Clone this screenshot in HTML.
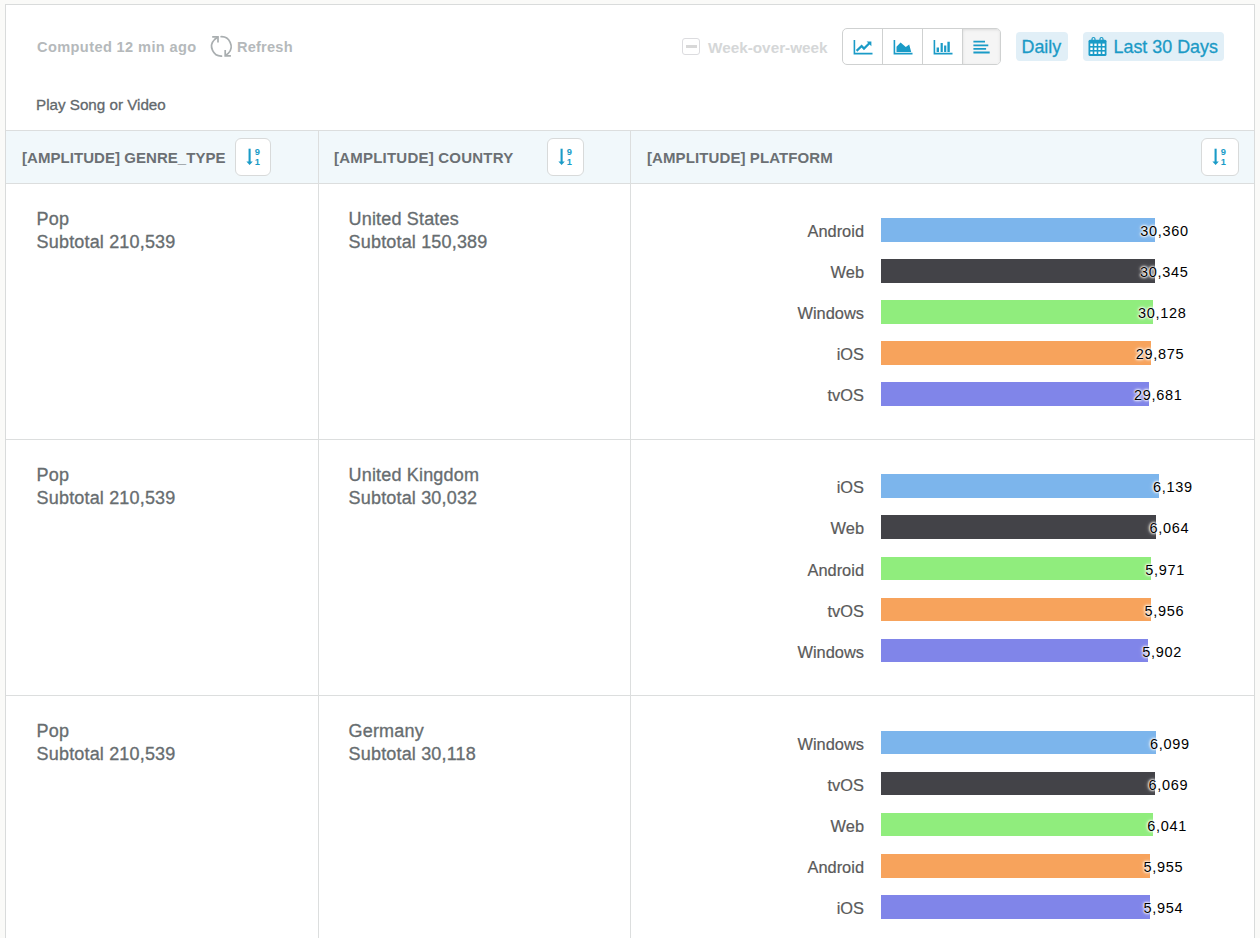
<!DOCTYPE html>
<html><head><meta charset="utf-8">
<style>
html,body{margin:0;padding:0;}
body{width:1260px;height:938px;overflow:hidden;background:#fafaf8;font-family:"Liberation Sans",sans-serif;position:relative;}
.wrap{position:absolute;left:5px;top:4px;width:1248px;height:960px;border:1px solid #d9dbdb;background:#fff;}
.abs{position:absolute;white-space:nowrap;}
.computed{left:31px;top:33.5px;font-size:14.6px;font-weight:bold;letter-spacing:0.38px;color:#b5b9bb;}
.refresh{left:231px;top:33.5px;font-size:14.6px;font-weight:bold;letter-spacing:0.2px;color:#b5b9bb;}
.wow{left:702px;top:34px;font-size:15.3px;font-weight:bold;color:#d5d7d8;}
.chk{left:676px;top:33px;width:16px;height:15px;border:1px solid #dcdcdf;border-radius:3px;}
.chk:after{content:"";position:absolute;left:2.5px;top:6px;width:11px;height:3px;background:#d8d8d8;}
.bg{left:836px;top:23px;height:35px;border:1px solid #cfd1d1;border-radius:5px;display:flex;overflow:hidden;}
.bg>div{width:39px;height:35px;border-left:1px solid #cfd1d1;position:relative;}
.bg>div:first-child{border-left:none;}
.bg>div.act{background:#f5f5f5;box-shadow:inset 0 1px 3px rgba(0,0,0,.11);}
.bg svg{position:absolute;left:0;top:0;}
.chip{top:27px;height:29px;background:#e1eff7;border-radius:4px;color:#1b9ac6;font-size:17.9px;-webkit-text-stroke:0.3px #1b9ac6;}
.chip span{position:absolute;top:5px;}
.title{left:30px;top:91.3px;font-size:15.2px;color:#62686c;-webkit-text-stroke:0.3px #62686c;}
.hdr{left:0;top:125px;width:1248px;height:52px;border-top:1px solid #dcdede;border-bottom:1px solid #dcdede;background:#f1f8fb;}
.ht{position:absolute;top:17.6px;font-size:15px;font-weight:bold;color:#6b7074;white-space:nowrap;letter-spacing:0.05px;}
.sep{position:absolute;top:125px;width:1px;height:900px;background:#dcdede;}
.sort{position:absolute;top:7px;box-sizing:border-box;height:38px;border:1px solid #d8dada;border-radius:6px;background:#fff;}
.sort svg{position:absolute;left:0;top:0;}
.row{position:absolute;left:0;width:1248px;height:255px;border-bottom:1px solid #dcdede;}
.cell{position:absolute;top:24px;font-size:18px;color:#676d70;line-height:23px;white-space:nowrap;-webkit-text-stroke:0.32px #676d70;letter-spacing:0.17px;}
.c1{left:30.6px;}
.c2{left:342.6px;}
.bl{position:absolute;left:658px;width:200px;text-align:right;font-size:16.4px;color:#5a5a5a;height:26px;line-height:26px;-webkit-text-stroke:0.2px #5a5a5a;}
.bar{position:absolute;left:875px;height:23.5px;}
.bv{position:absolute;width:200px;text-align:right;font-size:14.5px;letter-spacing:0.7px;color:#000;height:27px;line-height:27px;text-shadow:0 0 5px rgba(255,255,255,.7),0 0 3px #fff,0 0 3px #fff,0 0 2px #fff,0 0 1px #fff;}
</style></head><body>
<div class="wrap">
 <div class="abs computed">Computed 12 min ago</div>
 <svg class="abs" style="left:199px;top:25px" width="32" height="32" viewBox="0 0 32 32" fill="none" stroke="#a9aeb0" stroke-width="1.7">
<path d="M17.2 26.1 A9.7 9.7 0 0 1 9.6 9.5 L13 6.9"/><path d="M7.2 6.8 H13 V12.6"/>
<path d="M15.4 6.75 A9.7 9.7 0 0 1 23.2 23.3 L20.3 25.6"/><path d="M20.2 20.1 V25.9 H25.9"/>
</svg>
 <div class="abs refresh">Refresh</div>
 <div class="abs chk"></div>
 <div class="abs wow">Week-over-week</div>
 <div class="abs bg">
  <div><svg width="39" height="34" viewBox="0 0 39 34"><path d="M11.4 11 V24.6 H29.5" fill="none" stroke="#1a9bc7" stroke-width="1.6"/><path d="M13.6 21.9 L18.6 17 L21 19.6 L26.6 14" fill="none" stroke="#1a9bc7" stroke-width="2.2"/><path d="M23.6 12.4 H28.4 V17.2Z" fill="#1a9bc7"/></svg></div>
  <div><svg width="39" height="34" viewBox="0 0 39 34"><path d="M11.4 11 V24.6 H29.5" fill="none" stroke="#1a9bc7" stroke-width="1.6"/><path d="M13.5 23.1 V17.8 L17.6 13.5 L22.8 18.1 L26.2 15.6 L28.2 23.1Z" fill="#1a9bc7"/></svg></div>
  <div><svg width="39" height="34" viewBox="0 0 39 34"><path d="M11.4 11 V24.6 H29.5" fill="none" stroke="#1a9bc7" stroke-width="1.6"/><path d="M13.6 23.1 V18.5 H16 V23.1Z M17.6 23.1 V13.9 H19.8 V23.1Z M21.1 23.1 V16.4 H23.3 V23.1Z M24.4 23.1 V12.8 H26.8 V23.1Z" fill="#1a9bc7"/></svg></div>
  <div class="act" style="width:37px"><svg width="39" height="34" viewBox="0 0 39 34"><path d="M10.4 11.7 H22 V13.5 H10.4Z M10.4 15.5 H25.3 V17.3 H10.4Z M10.4 18.9 H23.1 V20.7 H10.4Z M10.4 22.4 H26.7 V24.4 H10.4Z" fill="#1a9bc7"/></svg></div>
 </div>
 <div class="abs chip" style="left:1010px;width:52px;"><span style="left:5.5px">Daily</span></div>
 <div class="abs chip" style="left:1077px;width:141px;">
  <svg style="position:absolute;left:-0.5px;top:0" width="40" height="29" viewBox="0 0 40 29"><rect x="5.5" y="7.8" width="18" height="16.1" rx="1.5" fill="#1a9bc7"/>
  <path d="M9 10 V7 A1.5 1.5 0 0 1 12 7 V10 M17 10 V7 A1.5 1.5 0 0 1 20 7 V10" fill="none" stroke="#1a9bc7" stroke-width="1.2"/>
  <g fill="#fff"><rect x="7.3" y="11.6" width="2.4" height="2.4"/><rect x="11.3" y="11.6" width="2.4" height="2.4"/><rect x="15.3" y="11.6" width="2.4" height="2.4"/><rect x="19.3" y="11.6" width="2.4" height="2.4"/><rect x="7.3" y="15.6" width="2.4" height="2.4"/><rect x="11.3" y="15.6" width="2.4" height="2.4"/><rect x="15.3" y="15.6" width="2.4" height="2.4"/><rect x="19.3" y="15.6" width="2.4" height="2.4"/><rect x="7.3" y="19.6" width="2.4" height="2.4"/><rect x="11.3" y="19.6" width="2.4" height="2.4"/><rect x="15.3" y="19.6" width="2.4" height="2.4"/><rect x="19.3" y="19.6" width="2.4" height="2.4"/></g></svg>
  <span style="left:30.5px">Last 30 Days</span></div>
 <div class="abs title">Play Song or Video</div>
 <div class="abs hdr">
  <div class="ht" style="left:16px">[AMPLITUDE] GENRE_TYPE</div>
  <div class="sort" style="left:229.2px;width:36px"><svg width="36" height="36" viewBox="0 0 36 36">
<path d="M13.6 9.7 V23.5" stroke="#1a9bc7" stroke-width="2.1"/><path d="M10.4 22.4 L13.6 25.9 L16.8 22.4Z" fill="#1a9bc7"/>
<text x="21.4" y="16.4" font-size="9.3" font-weight="bold" fill="#1a9bc7" text-anchor="middle" font-family="Liberation Sans">9</text>
<text x="21.4" y="26.3" font-size="9.3" font-weight="bold" fill="#1a9bc7" text-anchor="middle" font-family="Liberation Sans">1</text>
</svg></div>
  <div class="ht" style="left:328px;letter-spacing:0.22px">[AMPLITUDE] COUNTRY</div>
  <div class="sort" style="left:541.2px;width:36.5px"><svg width="36" height="36" viewBox="0 0 36 36">
<path d="M13.6 9.7 V23.5" stroke="#1a9bc7" stroke-width="2.1"/><path d="M10.4 22.4 L13.6 25.9 L16.8 22.4Z" fill="#1a9bc7"/>
<text x="21.4" y="16.4" font-size="9.3" font-weight="bold" fill="#1a9bc7" text-anchor="middle" font-family="Liberation Sans">9</text>
<text x="21.4" y="26.3" font-size="9.3" font-weight="bold" fill="#1a9bc7" text-anchor="middle" font-family="Liberation Sans">1</text>
</svg></div>
  <div class="ht" style="left:641px;letter-spacing:0.1px">[AMPLITUDE] PLATFORM</div>
  <div class="sort" style="left:1195.3px;width:37.4px"><svg width="36" height="36" viewBox="0 0 36 36">
<path d="M13.6 9.7 V23.5" stroke="#1a9bc7" stroke-width="2.1"/><path d="M10.4 22.4 L13.6 25.9 L16.8 22.4Z" fill="#1a9bc7"/>
<text x="21.4" y="16.4" font-size="9.3" font-weight="bold" fill="#1a9bc7" text-anchor="middle" font-family="Liberation Sans">9</text>
<text x="21.4" y="26.3" font-size="9.3" font-weight="bold" fill="#1a9bc7" text-anchor="middle" font-family="Liberation Sans">1</text>
</svg></div>
 </div>
 <div class="sep" style="left:312px"></div>
 <div class="sep" style="left:624px"></div>
<div class="row" style="top:179px">
<div class="cell c1"><div class="l1">Pop</div><div class="l2">Subtotal 210,539</div></div>
<div class="cell c2"><div class="l1">United States</div><div class="l2">Subtotal 150,389</div></div>
<div class="bl" style="top:34.00px">Android</div>
<div class="bar" style="top:34.00px;width:274.0px;background:#7cb5ec"></div>
<div class="bv" style="top:34.00px;left:982.7px">30,360</div>
<div class="bl" style="top:75.07px">Web</div>
<div class="bar" style="top:75.07px;width:273.9px;background:#434348"></div>
<div class="bv" style="top:75.07px;left:982.6px">30,345</div>
<div class="bl" style="top:116.14px">Windows</div>
<div class="bar" style="top:116.14px;width:271.9px;background:#90ed7d"></div>
<div class="bv" style="top:116.14px;left:980.6px">30,128</div>
<div class="bl" style="top:157.21px">iOS</div>
<div class="bar" style="top:157.21px;width:269.6px;background:#f7a35c"></div>
<div class="bv" style="top:157.21px;left:978.3px">29,875</div>
<div class="bl" style="top:198.28px">tvOS</div>
<div class="bar" style="top:198.28px;width:267.9px;background:#8085e9"></div>
<div class="bv" style="top:198.28px;left:976.6px">29,681</div>
</div>
<div class="row" style="top:435px">
<div class="cell c1"><div class="l1">Pop</div><div class="l2">Subtotal 210,539</div></div>
<div class="cell c2"><div class="l1">United Kingdom</div><div class="l2">Subtotal 30,032</div></div>
<div class="bl" style="top:34.40px">iOS</div>
<div class="bar" style="top:34.40px;width:278.0px;background:#7cb5ec"></div>
<div class="bv" style="top:34.40px;left:986.7px">6,139</div>
<div class="bl" style="top:75.47px">Web</div>
<div class="bar" style="top:75.47px;width:274.6px;background:#434348"></div>
<div class="bv" style="top:75.47px;left:983.3px">6,064</div>
<div class="bl" style="top:116.54px">Android</div>
<div class="bar" style="top:116.54px;width:270.4px;background:#90ed7d"></div>
<div class="bv" style="top:116.54px;left:979.1px">5,971</div>
<div class="bl" style="top:157.61px">tvOS</div>
<div class="bar" style="top:157.61px;width:269.7px;background:#f7a35c"></div>
<div class="bv" style="top:157.61px;left:978.4px">5,956</div>
<div class="bl" style="top:198.68px">Windows</div>
<div class="bar" style="top:198.68px;width:267.3px;background:#8085e9"></div>
<div class="bv" style="top:198.68px;left:976.0px">5,902</div>
</div>
<div class="row" style="top:691px">
<div class="cell c1"><div class="l1">Pop</div><div class="l2">Subtotal 210,539</div></div>
<div class="cell c2"><div class="l1">Germany</div><div class="l2">Subtotal 30,118</div></div>
<div class="bl" style="top:34.80px">Windows</div>
<div class="bar" style="top:34.80px;width:275.0px;background:#7cb5ec"></div>
<div class="bv" style="top:34.80px;left:983.7px">6,099</div>
<div class="bl" style="top:75.87px">tvOS</div>
<div class="bar" style="top:75.87px;width:273.6px;background:#434348"></div>
<div class="bv" style="top:75.87px;left:982.3px">6,069</div>
<div class="bl" style="top:116.94px">Web</div>
<div class="bar" style="top:116.94px;width:272.4px;background:#90ed7d"></div>
<div class="bv" style="top:116.94px;left:981.1px">6,041</div>
<div class="bl" style="top:158.01px">Android</div>
<div class="bar" style="top:158.01px;width:268.5px;background:#f7a35c"></div>
<div class="bv" style="top:158.01px;left:977.2px">5,955</div>
<div class="bl" style="top:199.08px">iOS</div>
<div class="bar" style="top:199.08px;width:268.5px;background:#8085e9"></div>
<div class="bv" style="top:199.08px;left:977.2px">5,954</div>
</div>
</div>
</body></html>
